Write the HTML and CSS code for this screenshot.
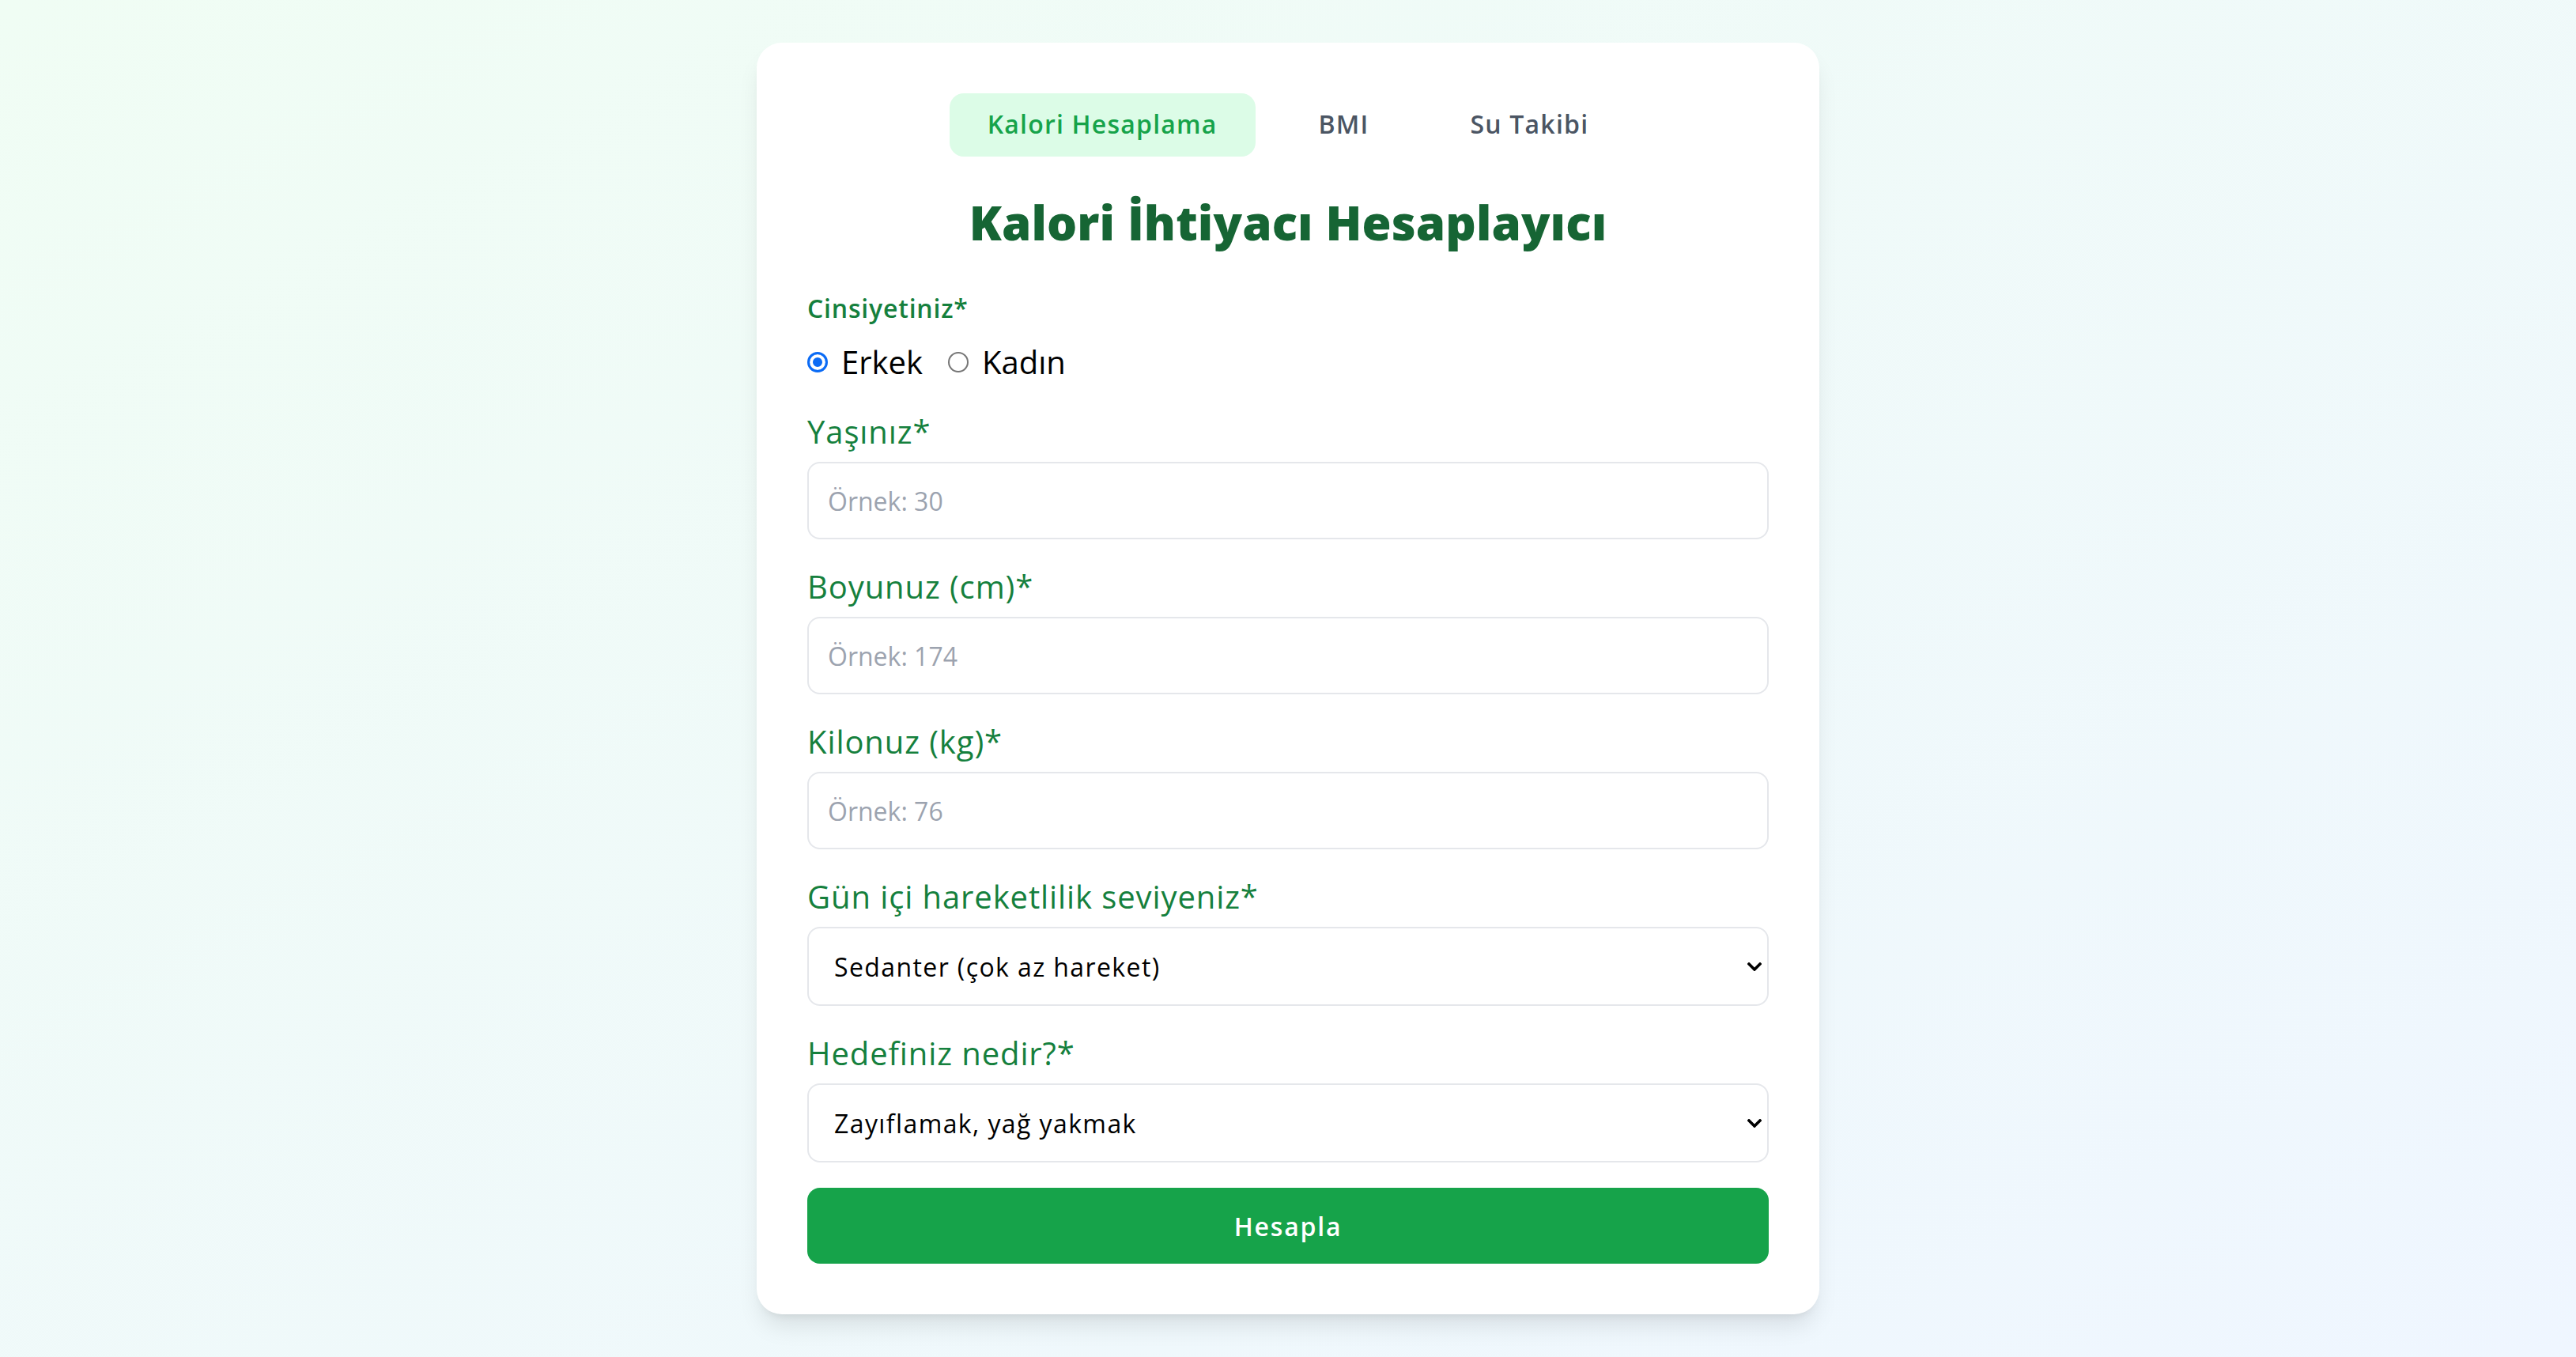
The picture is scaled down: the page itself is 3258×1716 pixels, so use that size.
FILE: index.html
```html
<!DOCTYPE html>
<html lang="tr">
<head>
<meta charset="utf-8">
<title>Kalori İhtiyacı Hesaplayıcı</title>
<link rel="stylesheet" href="styles.css">
</head>
<body>
<main class="page">
  <section class="card">
    <nav class="tabs">
      <button class="tab tab-active" type="button">Kalori Hesaplama</button>
      <button class="tab" type="button">BMI</button>
      <button class="tab" type="button">Su Takibi</button>
    </nav>
    <h1 class="title">Kalori İhtiyacı Hesaplayıcı</h1>
    <form class="form">
      <div class="gender">
        <span class="gender-label">Cinsiyetiniz*</span>
        <div class="radios">
          <label class="radio"><span class="radio-dot radio-checked"></span>Erkek</label>
          <label class="radio"><span class="radio-dot"></span>Kadın</label>
        </div>
      </div>
      <div class="field">
        <label class="field-label" for="age">Yaşınız*</label>
        <input class="input" id="age" type="text" placeholder="Örnek: 30">
      </div>
      <div class="field">
        <label class="field-label" for="height">Boyunuz (cm)*</label>
        <input class="input" id="height" type="text" placeholder="Örnek: 174">
      </div>
      <div class="field">
        <label class="field-label" for="weight">Kilonuz (kg)*</label>
        <input class="input" id="weight" type="text" placeholder="Örnek: 76">
      </div>
      <div class="field">
        <label class="field-label" for="activity">Gün içi hareketlilik seviyeniz*</label>
        <div class="select-wrap">
          <select class="select" id="activity">
            <option>Sedanter (çok az hareket)</option>
          </select>
          <svg class="chevron" viewBox="0 0 18 11" aria-hidden="true"><path d="M2 2 L9 9 L16 2" fill="none" stroke="#000" stroke-width="3.6" stroke-linecap="square"/></svg>
        </div>
      </div>
      <div class="field">
        <label class="field-label" for="goal">Hedefiniz nedir?*</label>
        <div class="select-wrap">
          <select class="select" id="goal">
            <option>Zayıflamak, yağ yakmak</option>
          </select>
          <svg class="chevron" viewBox="0 0 18 11" aria-hidden="true"><path d="M2 2 L9 9 L16 2" fill="none" stroke="#000" stroke-width="3.6" stroke-linecap="square"/></svg>
        </div>
      </div>
      <button class="submit" type="button">Hesapla</button>
    </form>
  </section>
</main>
</body>
</html>
```

FILE: styles.css
```css
* { box-sizing: border-box; }

html, body {
  margin: 0;
  padding: 0;
}

body {
  font-family: "Open Sans", "Noto Sans", sans-serif;
  background: linear-gradient(to bottom right, #f0fdf4, #eff6ff);
  min-height: 100vh;
}

.page {
  min-height: 100vh;
  display: flex;
  align-items: center;
  justify-content: center;
}

.card {
  width: 1344px;
  padding: 64px;
  background: #ffffff;
  border-radius: 32px;
  box-shadow: 0 20px 30px -6px rgba(0, 0, 0, 0.1), 0 8px 12px -8px rgba(0, 0, 0, 0.1);
}

.tabs {
  display: flex;
  justify-content: center;
  gap: 32px;
  margin-bottom: 48px;
}

.tab {
  font-family: inherit;
  font-size: 32px;
  line-height: 48px;
  font-weight: 600;
  padding: 15px 48px 17px;
  border: 0;
  border-radius: 18px;
  background: transparent;
  color: #4b5563;
  letter-spacing: 1.2px;
}

.tab-active {
  background: #dcfce7;
  color: #16a34a;
}

.title {
  margin: 0 0 48px;
  padding-bottom: 2px;
  height: 72px;
  text-align: center;
  font-size: 60px;
  line-height: 70px;
  font-weight: 800;
  color: #166534;
  letter-spacing: 0.1px;
}

.form {
  display: flex;
  flex-direction: column;
  gap: 32px;
}

.gender {
  display: flex;
  flex-direction: column;
  gap: 16px;
}

.gender-label {
  font-size: 32px;
  line-height: 48px;
  font-weight: 600;
  color: #15803d;
  letter-spacing: 0.8px;
}

.radios {
  display: flex;
  align-items: center;
  gap: 32px;
  height: 56px;
}

.radio {
  display: flex;
  align-items: center;
  gap: 17px;
  font-size: 40px;
  line-height: 56px;
  color: #000;
}

.radio-dot {
  width: 26px;
  height: 26px;
  border-radius: 50%;
  border: 2px solid #767676;
  background: #fff;
  flex: none;
}

.radio-checked {
  border: 3px solid #0b6bf5;
  box-shadow: inset 0 0 0 4px #fff, inset 0 0 0 13px #0b6bf5;
}

.field {
  display: flex;
  flex-direction: column;
  gap: 10px;
}

.field-label {
  font-size: 40px;
  line-height: 56px;
  font-weight: 400;
  color: #15803d;
  letter-spacing: 0.9px;
}

.input {
  height: 98px;
  padding: 0 24px;
  font-family: inherit;
  font-size: 32px;
  border: 2px solid #e5e7eb;
  border-radius: 16px;
  background: #fff;
  color: #111827;
  outline: none;
}

.input::placeholder {
  color: #9ca3af;
}

.select-wrap {
  position: relative;
}

.select {
  width: 100%;
  height: 100px;
  padding: 0 60px 0 32px;
  font-family: inherit;
  font-size: 32px;
  color: #000;
  letter-spacing: 1.4px;
  border: 2px solid #e5e7eb;
  border-radius: 16px;
  background: #fff;
  -webkit-appearance: none;
  appearance: none;
  outline: none;
}

.chevron {
  position: absolute;
  right: 9px;
  top: 45px;
  width: 18px;
  height: 11px;
  pointer-events: none;
}

.submit {
  height: 96px;
  border: 0;
  border-radius: 16px;
  background: #16a34a;
  color: #fff;
  font-family: inherit;
  font-size: 32px;
  font-weight: 600;
  letter-spacing: 1.8px;
}
```
